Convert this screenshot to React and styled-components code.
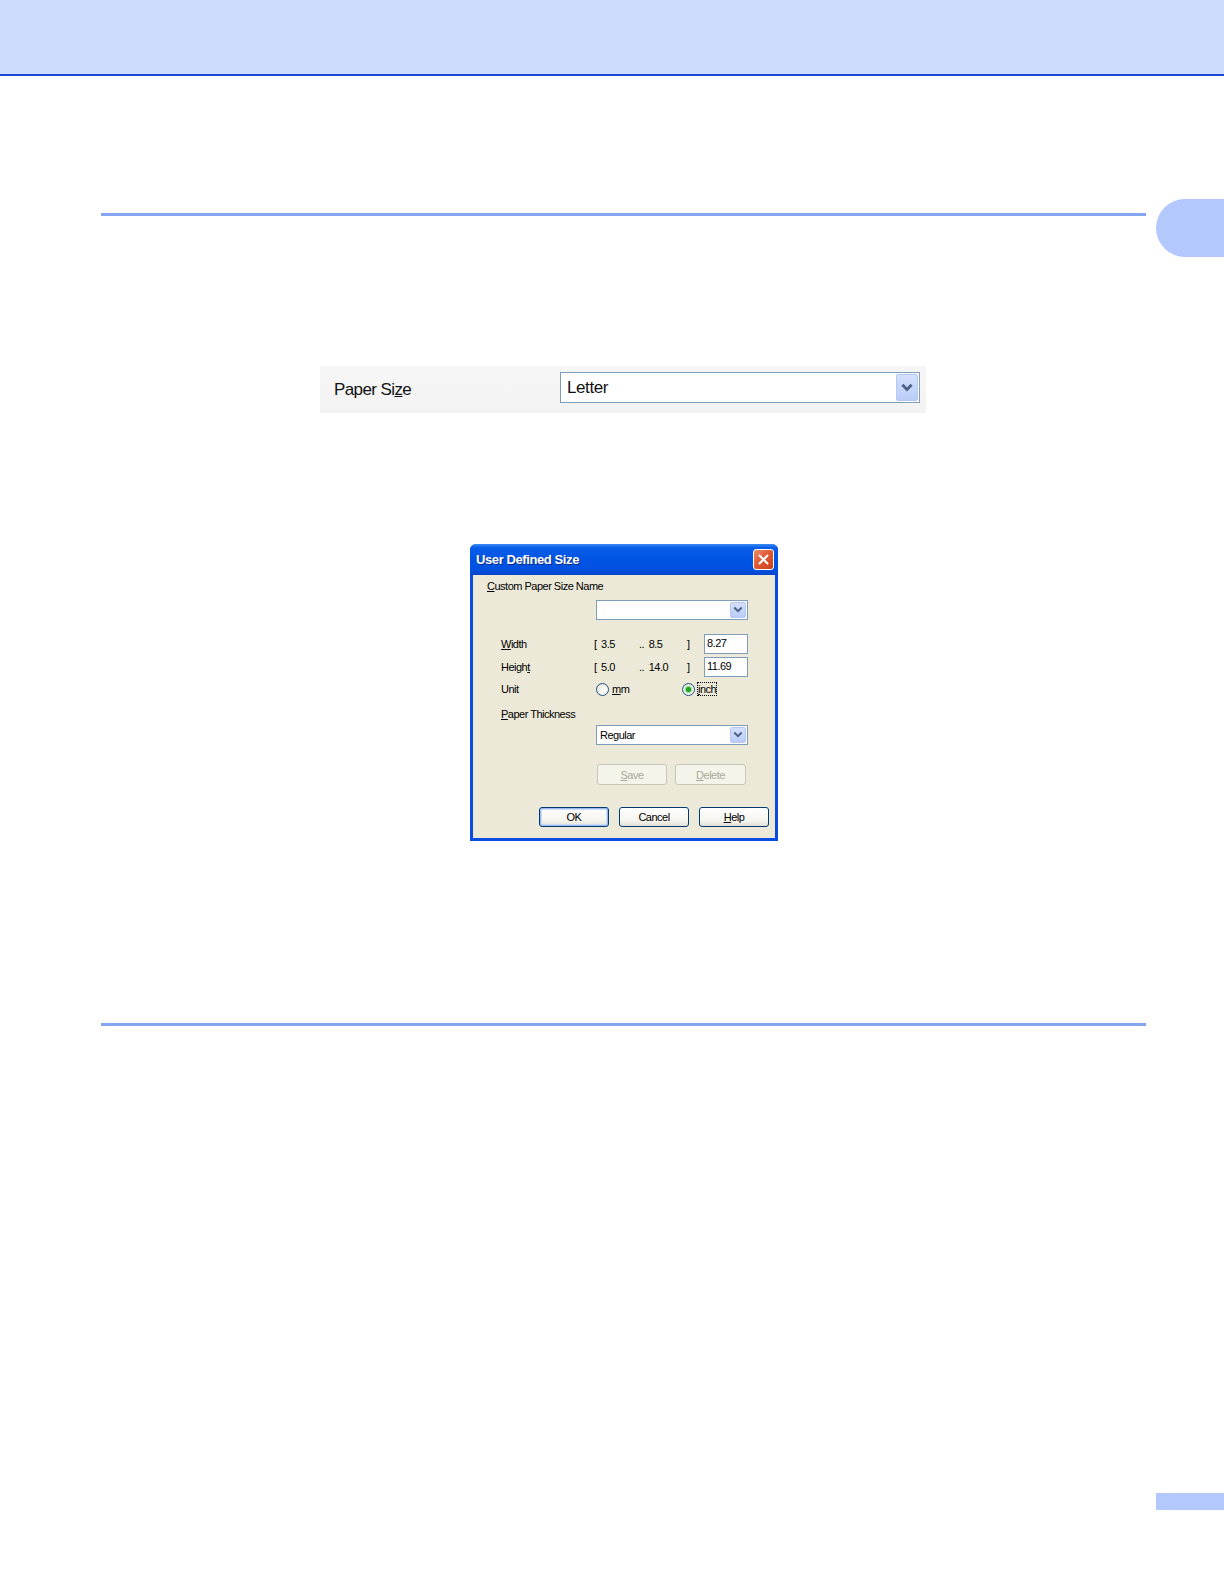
import React from 'react';
import styled, { createGlobalStyle } from 'styled-components';

const GlobalStyle = createGlobalStyle`
    html, body {
        margin: 0;
        padding: 0;
        background: #ffffff;
    }
    body {
        font-family: "Liberation Sans", Arial, sans-serif;
    }
`;

const Page = styled.div`
    width: 1224px;
    height: 1584px;
    display: flex;
    flex-direction: column;
    overflow: hidden;
`;

const Header = styled.div`
    height: 74px;
    background: #cddcfd;
    border-bottom: 2px solid #1a47d8;
`;

const RuleRow = styled.div`
    display: flex;
    align-items: flex-start;
    margin-top: ${p => p.$top}px;
    padding-left: 101px;
    height: ${p => p.$height}px;
`;

const Rule = styled.div`
    width: 1045px;
    height: 3px;
    background: #84a6f0;
    margin-top: ${p => p.$offset}px;
`;

const SideTab = styled.div`
    margin-left: auto;
    width: 68px;
    height: 58px;
    background: #b3c8fd;
    border-radius: 30px 0 0 30px;
`;

const Figure = styled.div`
    display: flex;
    justify-content: center;
    padding-left: ${p => p.$shift}px;
    margin-top: ${p => p.$top}px;
`;

const PaperStrip = styled.div`
    width: 606px;
    height: 47px;
    background: linear-gradient(180deg, #f6f6f6 0%, #f3f3f3 100%);
    display: flex;
    align-items: flex-start;
    box-sizing: border-box;
    padding: 6px 0 0 14px;
`;

const StripLabel = styled.span`
    width: 226px;
    font-size: 17px;
    letter-spacing: -0.6px;
    color: #111;
    padding-top: 8px;
`;

const BigSelect = styled.div`
    width: 360px;
    height: 31px;
    box-sizing: border-box;
    border: 1px solid #7f9db9;
    background: #fff;
    display: flex;
    align-items: center;
    justify-content: space-between;
    padding: 0 1px 0 6px;
    font-size: 17px;
    letter-spacing: -0.4px;
    color: #111;
`;

const DropButton = styled.div`
    width: ${p => p.$w}px;
    height: ${p => p.$h}px;
    box-sizing: border-box;
    border: 1px solid #b5c8f3;
    border-radius: 2px;
    background: linear-gradient(180deg, #d4e0fc 0%, #b9cdf8 100%);
    display: flex;
    align-items: center;
    justify-content: center;
`;

const Dialog = styled.div`
    width: 308px;
    height: 297px;
    box-sizing: border-box;
    border: 3px solid #0a4be0;
    border-top: none;
    border-radius: 6px 6px 0 0;
    background: #ece9d8;
    display: flex;
    flex-direction: column;
    font-family: "Liberation Sans", Arial, sans-serif;
    font-size: 11px;
    letter-spacing: -0.5px;
    word-spacing: 2px;
    color: #000;
`;

const TitleBar = styled.div`
    height: 31px;
    margin: 0 -3px;
    border-radius: 6px 6px 0 0;
    background: linear-gradient(180deg, #3a8cf8 0%, #0a5de8 12%, #0054e3 50%, #0150e0 85%, #0845c8 100%);
    display: flex;
    align-items: center;
    justify-content: space-between;
    padding: 0 4px 0 6px;
    word-spacing: 0;
`;

const TitleText = styled.span`
    color: #fff;
    font-weight: bold;
    font-size: 13px;
    letter-spacing: -0.4px;
    text-shadow: 1px 1px 0 #0a2c8a;
`;

const CloseButton = styled.div`
    width: 21px;
    height: 21px;
    box-sizing: border-box;
    border: 1px solid #fff;
    border-radius: 3px;
    background: linear-gradient(135deg, #e98d6e 0%, #e05a36 45%, #c8411c 100%);
    display: flex;
    align-items: center;
    justify-content: center;
`;

const Body = styled.div`
    display: flex;
    flex-direction: column;
    padding: 4px 0 0 14px;
`;

const Line = styled.div`
    display: flex;
    align-items: center;
    height: ${p => p.$h || 23}px;
    padding-left: ${p => p.$indent || 0}px;
    margin-top: ${p => p.$top || 0}px;
    word-spacing: ${p => (p.$tight ? 0 : 2)}px;
`;

const Cell = styled.span`
    width: ${p => p.$w}px;
    flex-shrink: 0;
`;

const Combo = styled.div`
    width: 152px;
    height: 20px;
    box-sizing: border-box;
    border: 1px solid #7f9db9;
    background: #fff;
    display: flex;
    align-items: center;
    justify-content: space-between;
    padding: 0 1px 0 3px;
`;

const TextInput = styled.div`
    width: 44px;
    height: 20px;
    box-sizing: border-box;
    border: 1px solid #7f9db9;
    background: #fff;
    padding: 2px 0 0 2px;
`;

const RadioLabel = styled.label`
    display: flex;
    align-items: center;
    gap: 3px;
    width: ${p => p.$w}px;
`;

const RadioDot = styled.span`
    width: 13px;
    height: 13px;
    box-sizing: border-box;
    border-radius: 50%;
    border: 1px solid #1c5180;
    background: radial-gradient(circle at 65% 65%, #ffffff 0%, #f0efe8 60%, #d4d3cc 100%);
    display: flex;
    align-items: center;
    justify-content: center;
    &::after {
        content: '';
        display: ${p => (p.$on ? 'block' : 'none')};
        width: 5px;
        height: 5px;
        border-radius: 50%;
        background: #21a121;
        box-shadow: 0 0 1px 1px #7fd67f;
    }
`;

const Focus = styled.span`
    outline: 1px dotted #000;
    outline-offset: 0;
`;

const ButtonRow = styled.div`
    display: flex;
    gap: ${p => p.$gap}px;
    padding-left: ${p => p.$indent}px;
    margin-top: ${p => p.$top}px;
`;

const Button = styled.div`
    width: ${p => p.$w}px;
    height: ${p => p.$h}px;
    box-sizing: border-box;
    border: 1px solid ${p => (p.$disabled ? '#c9c7ba' : '#003c74')};
    border-radius: 3px;
    background: ${p => (p.$disabled ? '#f5f4ea' : 'linear-gradient(180deg, #ffffff 0%, #f5f4ee 70%, #e3e1d6 100%)')};
    box-shadow: ${p => (p.$default ? 'inset 0 0 0 1px #99b9ef, inset 0 0 0 2px #cfdcf7' : 'none')};
    color: ${p => (p.$disabled ? '#aca899' : '#000')};
    display: flex;
    align-items: center;
    justify-content: center;
`;

const Key = styled.u`
    text-decoration-thickness: 1px;
    text-underline-offset: 1px;
`;

const Footer = styled.div`
    display: flex;
    justify-content: flex-end;
    margin-top: ${p => p.$top}px;
`;

const PageTab = styled.div`
    width: 68px;
    height: 17px;
    background: #b3c8fd;
`;

const Chevron = ({ size = 10, width = 2 }) => (
    <svg width={size} height={size} viewBox="0 0 10 10">
        <path d="M2 3.2 L5 6.2 L8 3.2" fill="none" stroke="#4d6185" strokeWidth={width} strokeLinecap="square" />
    </svg>
);

const CloseGlyph = () => (
    <svg width="13" height="13" viewBox="0 0 13 13">
        <path d="M2.5 2.5 L10.5 10.5 M10.5 2.5 L2.5 10.5" stroke="#fff" strokeWidth="2" strokeLinecap="round" />
    </svg>
);

const UserDefinedSize = () => (
    <Dialog>
        <TitleBar>
            <TitleText>User Defined Size</TitleText>
            <CloseButton><CloseGlyph /></CloseButton>
        </TitleBar>
        <Body>
            <Line $h={14} $tight><span><Key>C</Key>ustom Paper Size Name</span></Line>
            <Line $h={20} $indent={109} $top={7}>
                <Combo>
                    <span />
                    <DropButton $w={16} $h={16}><Chevron /></DropButton>
                </Combo>
            </Line>
            <Line $h={20} $indent={14} $top={14}>
                <Cell $w={93}><Key>W</Key>idth</Cell>
                <Cell $w={45}>[ 3.5</Cell>
                <Cell $w={48}>.. 8.5</Cell>
                <Cell $w={17}>]</Cell>
                <TextInput>8.27</TextInput>
            </Line>
            <Line $h={20} $indent={14} $top={3}>
                <Cell $w={93}>Heigh<Key>t</Key></Cell>
                <Cell $w={45}>[ 5.0</Cell>
                <Cell $w={48}>.. 14.0</Cell>
                <Cell $w={17}>]</Cell>
                <TextInput>11.69</TextInput>
            </Line>
            <Line $h={20} $indent={14} $top={2}>
                <Cell $w={95}>Unit</Cell>
                <RadioLabel $w={86}><RadioDot /><span><Key>m</Key>m</span></RadioLabel>
                <RadioLabel $w={50}><RadioDot $on /><Focus><Key>i</Key>nch</Focus></RadioLabel>
            </Line>
            <Line $h={20} $indent={14} $top={5} $tight><span><Key>P</Key>aper Thickness</span></Line>
            <Line $h={20} $indent={109} $top={1}>
                <Combo>
                    <span>Regular</span>
                    <DropButton $w={16} $h={16}><Chevron /></DropButton>
                </Combo>
            </Line>
            <ButtonRow $gap={8} $indent={110} $top={19}>
                <Button $w={70} $h={21} $disabled><span><Key>S</Key>ave</span></Button>
                <Button $w={71} $h={21} $disabled><span><Key>D</Key>elete</span></Button>
            </ButtonRow>
            <ButtonRow $gap={10} $indent={52} $top={22}>
                <Button $w={70} $h={20} $default>OK</Button>
                <Button $w={70} $h={20}>Cancel</Button>
                <Button $w={70} $h={20}><span><Key>H</Key>elp</span></Button>
            </ButtonRow>
        </Body>
    </Dialog>
);

const App = () => (
    <Page>
        <GlobalStyle />
        <Header />
        <RuleRow $top={123} $height={58}>
            <Rule $offset={14} />
            <SideTab />
        </RuleRow>
        <Figure $top={109} $shift={22}>
            <PaperStrip>
                <StripLabel>Paper Si<Key>z</Key>e</StripLabel>
                <BigSelect>
                    <span>Letter</span>
                    <DropButton $w={22} $h={27}><Chevron size={12} width={2.4} /></DropButton>
                </BigSelect>
            </PaperStrip>
        </Figure>
        <Figure $top={131} $shift={24}>
            <UserDefinedSize />
        </Figure>
        <RuleRow $top={182} $height={3}>
            <Rule $offset={0} />
        </RuleRow>
        <Footer $top={467}>
            <PageTab />
        </Footer>
    </Page>
);

export default App;
